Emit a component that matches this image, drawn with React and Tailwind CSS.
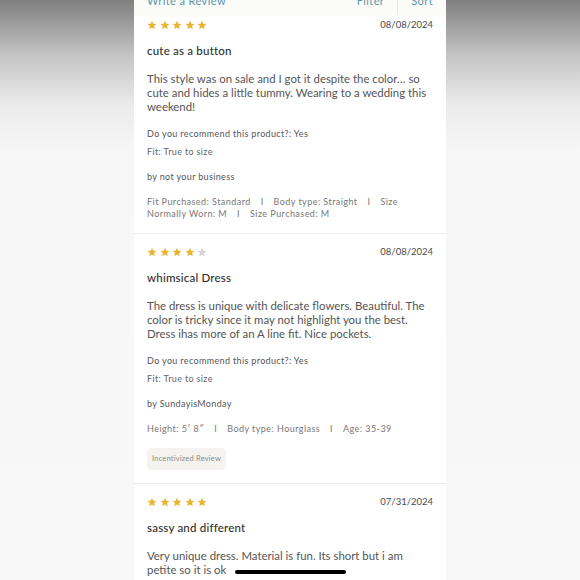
import { Fragment } from 'react'

const FONT = { fontFamily: 'Lato, "Open Sans", sans-serif' }

const reviews = [
  {
    rating: 5,
    date: '08/08/2024',
    title: 'cute as a button',
    body: 'This style was on sale and I got it despite the color… so cute and hides a little tummy. Wearing to a wedding this weekend!',
    author: 'not your business',
    meta: 'Fit Purchased: Standard\u2003 I \u2003Body type: Straight\u2003 I \u2003Size Normally Worn: M\u2003 I \u2003Size Purchased: M',
  },
  {
    rating: 4,
    date: '08/08/2024',
    title: 'whimsical Dress',
    body: 'The dress is unique with delicate flowers. Beautiful. The color is tricky since it may not highlight you the best. Dress ihas more of an A line fit. Nice pockets.',
    author: 'SundayisMonday',
    meta: 'Height: 5\u2032 8\u2033\u2003 I \u2003Body type: Hourglass\u2003 I \u2003Age: 35-39',
    badge: 'Incentivized Review',
  },
  {
    rating: 5,
    date: '07/31/2024',
    title: 'sassy and different',
    body: 'Very unique dress. Material is fun. Its short but i am petite so it is ok',
  },
]

function Stars({ rating }) {
  return (
    <div className="flex h-[12px] items-center gap-[2.5px]">
      {[0, 1, 2, 3, 4].map(i => (
        <svg key={i} width="10" height="10" viewBox="0 0 24 24">
          <path
            d="M12 1.8l3.1 7.1 7.6.6-5.8 5 1.8 7.5L12 18l-6.7 4 1.8-7.5-5.8-5 7.6-.6z"
            fill={i < rating ? '#e9b531' : '#d4d4d4'}
          />
        </svg>
      ))}
    </div>
  )
}

function Review({ r, first, last }) {
  return (
    <div className={`px-[13px] ${first ? 'pt-[3px]' : 'pt-[12px]'} ${last ? '' : 'pb-[13px] border-b border-[#ececec]'}`}>
      <div className="flex items-center justify-between">
        <Stars rating={r.rating} />
        <span className="text-[9.5px] leading-[12px] text-[#4a4a4a]">{r.date}</span>
      </div>
      <div className="mt-[13px] text-[11.5px] leading-[14px] font-medium tracking-[0.2px] text-[#2f2f2f]">{r.title}</div>
      <p className="mt-[14px] text-[11.4px] leading-[14px] text-[#555]">{r.body}</p>
      {r.author && (
        <Fragment>
          <div className="mt-[14px] text-[9px] leading-[12px] tracking-[0.35px] text-[#555]">Do you recommend this product?: Yes</div>
          <div className="mt-[6px] text-[9px] leading-[12px] tracking-[0.35px] text-[#666]">Fit: True to size</div>
          <div className="mt-[13px] text-[9px] leading-[12px] tracking-[0.35px] text-[#555]">by {r.author}</div>
          <div className="mt-[13px] text-[9px] leading-[12px] tracking-[0.45px] text-[#777] whitespace-pre-wrap">{r.meta}</div>
        </Fragment>
      )}
      {r.badge && (
        <div className="mt-[13px] flex h-[22px] w-fit items-center rounded-[5px] bg-[#f4f3ef] px-[5px] text-[7.5px] tracking-[0.2px] text-[#8a8a8a]">
          {r.badge}
        </div>
      )}
    </div>
  )
}

export default function App() {
  return (
    <div
      className="relative h-[580px] w-[580px] overflow-hidden bg-[linear-gradient(to_bottom,#7f7f7f_0px,#c4c4c4_55px,#ebebeb_105px,#f6f6f6_150px,#f8f8f8_580px)]"
      style={FONT}
    >
      <div className="mx-auto h-full w-[312px] bg-white">
        <div className="flex h-[16px] items-start justify-between overflow-hidden bg-[#fbfbf7] px-[13px]">
          <span className="-mt-[7px] text-[11px] leading-[16px] tracking-[0.4px] text-[#5a96ad]">Write a Review</span>
          <div className="-mt-[7px] flex items-start text-[11px] leading-[16px] tracking-[0.4px] text-[#5a96ad]">
            <span>Filter</span>
            <span className="mx-[13px] h-[22px] w-px bg-[#e6e6e2]" />
            <span>Sort</span>
          </div>
        </div>
        {reviews.map((r, i) => (
          <Review key={i} r={r} first={i === 0} last={i === reviews.length - 1} />
        ))}
      </div>
      <div className="absolute left-[235px] top-[570px] h-[4px] w-[111px] rounded-full bg-black" />
    </div>
  )
}
